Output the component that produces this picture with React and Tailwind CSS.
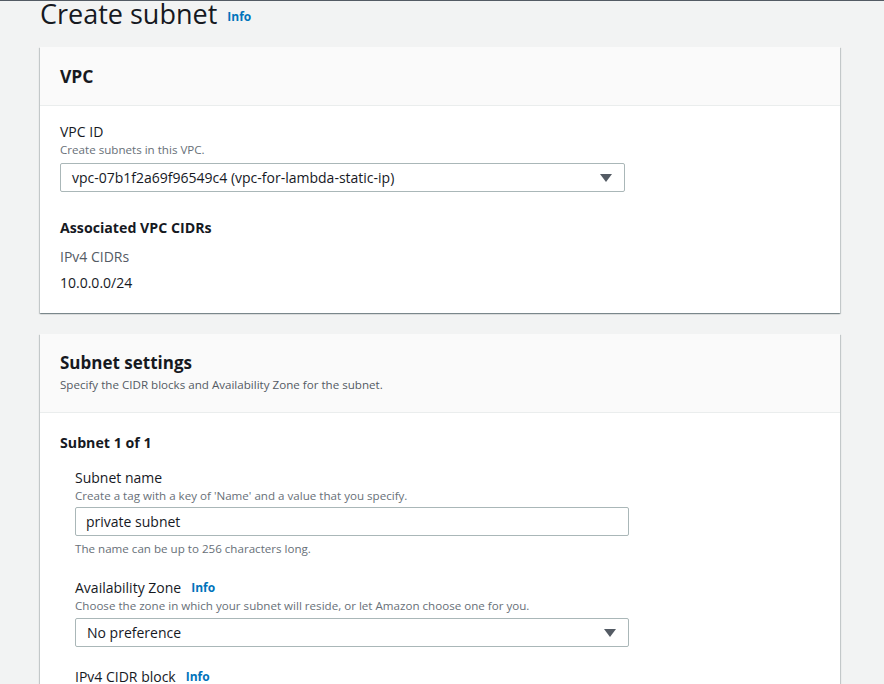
import React from 'react';

const font = { fontFamily: '"Open Sans", "Noto Sans", Arial, sans-serif' };

function Info({ className = '' }) {
  return <span className={`text-[12px] font-bold text-[#0073bb] ${className}`}>Info</span>;
}

function Caret() {
  return (
    <svg width="12" height="8" viewBox="0 0 12 8" className="shrink-0">
      <path d="M0 0 L12 0 L6 8 Z" fill="#545b64" />
    </svg>
  );
}

function SelectBox({ value, width }) {
  return (
    <div className={`${width} h-[29px] flex items-center justify-between border border-[#aab7b8] rounded-[2px] bg-white pl-[11px] pr-[12px]`}>
      <span className="text-[14px] text-[#16191f]">{value}</span>
      <Caret />
    </div>
  );
}

function Card({ children }) {
  return (
    <div className="bg-white shadow-[0_1px_1px_0_rgba(0,28,36,0.3),1px_1px_1px_0_rgba(0,28,36,0.15),-1px_1px_1px_0_rgba(0,28,36,0.15)]">
      {children}
    </div>
  );
}

export default function App() {
  return (
    <div style={font} className="w-[884px] h-[684px] overflow-hidden bg-[#f2f3f3] border-t border-[#545b64] text-[#16191f]">
      {/* Page title */}
      <div className="flex items-end gap-[10px] pl-[40px] h-[30px]">
        <h1 className="text-[27px] leading-[34px] text-[#16191f] -mt-[8px]">Create subnet</h1>
        <Info className="mb-[5px]" />
      </div>

      <div className="ml-[40px] w-[800px] pt-[16px] flex flex-col gap-[21px]">
        {/* VPC card */}
        <Card>
          <div className="bg-[#fafafa] border-b border-[#eaeded] h-[59px] flex items-center px-[20px]">
            <h2 className="text-[17.5px] font-bold">VPC</h2>
          </div>
          <div className="px-[20px] pt-[16px] pb-[20px]">
            <div className="text-[14px] leading-[20px]">VPC ID</div>
            <div className="text-[11.6px] leading-[16px] text-[#687078]">Create subnets in this VPC.</div>
            <div className="mt-[5px]">
              <SelectBox value="vpc-07b1f2a69f96549c4 (vpc-for-lambda-static-ip)" width="w-[565px]" />
            </div>
            <div className="mt-[26px] text-[14.2px] font-bold leading-[20px]">Associated VPC CIDRs</div>
            <div className="mt-[9px] text-[14px] leading-[20px] text-[#545b64]">IPv4 CIDRs</div>
            <div className="mt-[6px] text-[14px] leading-[20px]">10.0.0.0/24</div>
          </div>
        </Card>

        {/* Subnet settings card */}
        <Card>
          <div className="bg-[#fafafa] border-b border-[#eaeded] h-[79px] flex flex-col px-[20px] pt-[17px]">
            <h2 className="text-[17px] font-bold leading-[24px]">Subnet settings</h2>
            <div className="mt-[2px] text-[11.6px] leading-[16px] text-[#545b64]">Specify the CIDR blocks and Availability Zone for the subnet.</div>
          </div>
          <div className="px-[20px] pt-[20px] pb-[40px]">
            <div className="text-[14.2px] font-bold leading-[20px]">Subnet 1 of 1</div>
            <div className="pl-[15px] mt-[15px]">
              <div className="text-[14px] leading-[20px]">Subnet name</div>
              <div className="text-[11.6px] leading-[16px] text-[#687078]">Create a tag with a key of 'Name' and a value that you specify.</div>
              <div className="mt-[3px] w-[554px] h-[29px] flex items-center border border-[#aab7b8] rounded-[2px] pl-[10px] text-[14px]">
                private subnet
              </div>
              <div className="mt-[5px] text-[11.6px] leading-[16px] text-[#687078]">The name can be up to 256 characters long.</div>

              <div className="mt-[21px] flex items-center gap-[10px]">
                <span className="text-[14px] leading-[20px]">Availability Zone</span>
                <Info />
              </div>
              <div className="text-[11.6px] leading-[16px] text-[#687078]">Choose the zone in which your subnet will reside, or let Amazon choose one for you.</div>
              <div className="mt-[4px]">
                <SelectBox value="No preference" width="w-[554px]" />
              </div>

              <div className="mt-[20px] flex items-center gap-[10px]">
                <span className="text-[14px] leading-[20px]">IPv4 CIDR block</span>
                <Info />
              </div>
            </div>
          </div>
        </Card>
      </div>
    </div>
  );
}
